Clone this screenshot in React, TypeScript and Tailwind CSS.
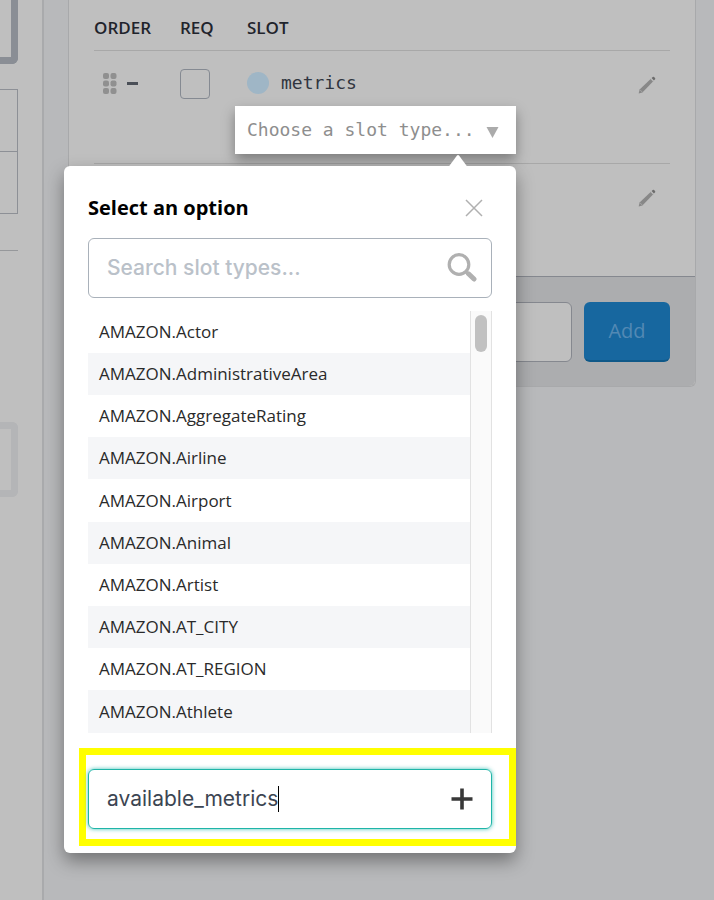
import React from "react";

const SLOT_TYPES = [
  "AMAZON.Actor",
  "AMAZON.AdministrativeArea",
  "AMAZON.AggregateRating",
  "AMAZON.Airline",
  "AMAZON.Airport",
  "AMAZON.Animal",
  "AMAZON.Artist",
  "AMAZON.AT_CITY",
  "AMAZON.AT_REGION",
  "AMAZON.Athlete",
];

function PencilIcon() {
  return (
    <svg width="18" height="18" viewBox="0 0 18 18" aria-hidden="true">
      <path d="M0.6 17.4 L1.6 13.6 L12.6 3 L15 5.4 L4.4 16.4 Z" fill="#888888" />
      <path d="M1.8 13.6 L4.4 16.2" stroke="#a5a5a5" strokeWidth="1" />
      <path d="M12.4 2.4 L15.6 5.6" stroke="#b4b4b4" strokeWidth="0.8" />
      <path d="M13.6 2.1 L14.8 0.9 Q15.5 0.4 16.1 1 L17 1.9 Q17.6 2.5 17.1 3.2 L15.9 4.4 Z" fill="#6c6c6c" />
    </svg>
  );
}

function GripIcon() {
  return (
    <svg width="14" height="22" viewBox="0 0 14 22" fill="#909090" aria-hidden="true">
      {[0, 7.5, 15].map((y) => (
        <g key={y}>
          <rect x="0" y={y} width="6" height="6" rx="2" />
          <rect x="7.5" y={y} width="6" height="6" rx="2" />
        </g>
      ))}
    </svg>
  );
}

function EditButton({ label }: { label: string }) {
  return (
    <button type="button" aria-label={label} className="block ml-auto mr-3.5">
      <PencilIcon />
    </button>
  );
}

function Sidebar() {
  return (
    <aside className="w-11 shrink-0 border-r-2 border-[#a9aaac] bg-[#bfbfbf] pr-6">
      <div className="h-16 rounded-br-md border-r-[7px] border-b-[7px] border-[#8a8e95]" />
      <div className="mt-[25px] h-[125px] border-y border-r border-[#8d9096]">
        <div className="h-[62px] border-b border-[#8d9096]" />
      </div>
      <div className="mt-9 border-t border-[#96989b]" />
      <div className="mt-[171px] h-[75px] rounded-r-md border-y-[7px] border-r-[7px] border-[#b4b5b7]" />
    </aside>
  );
}

function SlotTypePopover() {
  return (
    <div
      role="dialog"
      aria-labelledby="popover-title"
      className="absolute top-full right-0 z-10 mt-3 w-[452px] rounded-md bg-white px-6 pt-6 pb-[7px] shadow-[0_8px_18px_rgba(0,0,0,0.38)]"
    >
      <svg className="absolute -top-3 right-12" width="20" height="13" viewBox="0 0 20 13" aria-hidden="true">
        <path d="M0.5 13 L9 1.5 Q10 0.4 11 1.5 L19.5 13 Z" fill="#ffffff" />
      </svg>

      <div className="mb-3 flex h-9 items-center justify-between pr-2">
        <h2 id="popover-title" className="text-xl font-bold text-black">
          Select an option
        </h2>
        <button type="button" aria-label="Close">
          <svg width="20" height="20" viewBox="0 0 20 20" stroke="#b0b0b0" strokeWidth="1.5" aria-hidden="true">
            <path d="M2 2 L18 18 M18 2 L2 18" />
          </svg>
        </button>
      </div>

      <div className="flex h-15 items-center rounded-md border border-[#a9b1ba] pr-3.5 pl-[18px]">
        <input
          type="text"
          aria-label="Search slot types"
          placeholder="Search slot types..."
          className="min-w-0 flex-1 font-['Inter',sans-serif] text-[21px] font-medium outline-none placeholder:text-[#bac1c9]"
        />
        <svg width="30" height="30" viewBox="0 0 30 30" fill="none" stroke="#b0b0b0" aria-hidden="true">
          <circle cx="12" cy="11.5" r="9.8" strokeWidth="3.2" />
          <path d="M18.8 18.8 L20.5 20.5" strokeWidth="3" />
          <path d="M21.5 20.8 L27 26" strokeWidth="5" strokeLinecap="round" />
        </svg>
      </div>

      <div className="mt-[13px] flex h-[422px]">
        <ul className="flex flex-1 flex-col text-[17px] text-[#2a2a2a]">
          {SLOT_TYPES.map((type) => (
            <li key={type} className="flex flex-1 items-center px-[11px] even:bg-[#f5f6f8]">
              {type}
            </li>
          ))}
        </ul>
        <div className="w-[22px] border-x border-[#e2e2e2] bg-[#fafafa] px-1 pt-1">
          <div className="h-[37px] w-3 rounded-full bg-[#c1c1c1]" />
        </div>
      </div>

      <form className="mt-[15px] -mr-6 -ml-[9px] border-[7px] border-[#ffff00] pt-3.5 pr-[17px] pb-2.5 pl-[2px]">
        <div className="relative flex h-15 items-center rounded-md border border-[#1fb5a8] pr-[18px] pl-[18px] shadow-[0_0_4px_rgba(47,189,177,0.9)]">
          <input
            type="text"
            aria-label="New slot type"
            defaultValue="available_metrics"
            className="min-w-0 flex-1 font-['Inter',sans-serif] text-[21px] text-[#3c4552] outline-none"
          />
          <span className="absolute top-4 left-[189px] h-[26px] w-px bg-black" />
          <button type="button" aria-label="Add slot type">
            <svg width="22" height="22" viewBox="0 0 22 22" stroke="#383838" strokeWidth="3.6" aria-hidden="true">
              <path d="M11 0.5 V21.5 M0.5 11 H21.5" />
            </svg>
          </button>
        </div>
      </form>
    </div>
  );
}

function SlotTypePicker() {
  return (
    <div className="relative mt-[9px] -ml-3 w-[281px] bg-white shadow-[0_6px_12px_rgba(0,0,0,0.35)]">
      <select
        aria-label="Slot type"
        className="block h-12 w-full appearance-none px-3 font-['DejaVu_Sans_Mono',monospace] text-lg text-[#8e8e8e] outline-none"
      >
        <option>Choose a slot type...</option>
      </select>
      <svg className="pointer-events-none absolute top-5 right-[17px]" width="13" height="13" viewBox="0 0 13 13" aria-hidden="true">
        <path d="M0.5 1 H12.5 L6.5 12 Z" fill="#ababab" />
      </svg>
      <SlotTypePopover />
    </div>
  );
}

export default function App() {
  return (
    <div className="flex min-h-screen overflow-hidden bg-[#b8b9bb] font-['Open_Sans',sans-serif]">
      <Sidebar />
      <main className="mr-[18px] ml-6 min-w-0 flex-1 self-start rounded-b-md border-x border-b border-[#a8a9ab] bg-[#bfbfbf]">
        <div className="px-[25px]">
          <table className="w-full table-fixed border-collapse">
            <thead>
              <tr className="h-[50px] border-b border-[#a8a8a8] text-left text-[17px] text-[#1f242c]">
                <th className="w-[86px] pt-1.5 font-semibold">ORDER</th>
                <th className="w-[67px] pt-1.5 font-semibold">REQ</th>
                <th className="pt-1.5 font-semibold">SLOT</th>
                <th className="w-16" />
              </tr>
            </thead>
            <tbody>
              <tr className="h-[113px] border-b border-[#a8a8a8] align-top">
                <td className="pt-[22px]">
                  <div className="flex items-center gap-2.5 pl-[9px]">
                    <GripIcon />
                    <span className="h-[3px] w-[11px] bg-[#4a4f57]" />
                  </div>
                </td>
                <td className="pt-[18px]">
                  <input
                    type="checkbox"
                    aria-label="Required"
                    className="block size-[30px] appearance-none rounded-sm border border-[#858a92]"
                  />
                </td>
                <td className="pt-[18px]">
                  <div className="flex h-7 items-center gap-3">
                    <span className="size-[22px] rounded-full bg-[#9fb6c6]" />
                    <span className="font-['DejaVu_Sans_Mono',monospace] text-lg text-[#30353e]">metrics</span>
                  </div>
                  <SlotTypePicker />
                </td>
                <td className="pt-[25px]">
                  <EditButton label="Edit metrics" />
                </td>
              </tr>
              <tr className="h-[113px] align-top">
                <td />
                <td />
                <td />
                <td className="pt-[25px]">
                  <EditButton label="Edit new slot" />
                </td>
              </tr>
            </tbody>
          </table>
        </div>
        <div className="flex gap-3 rounded-b-md border-t border-[#85888f] bg-[#acadaf] px-[25px] pt-[25px] pb-6">
          <input
            type="text"
            aria-label="New slot name"
            className="h-15 min-w-0 flex-1 rounded-md border border-[#85888f] bg-[#bfbfbf] px-4 outline-none"
          />
          <button
            type="button"
            className="h-15 w-[86px] rounded-md border-b-2 border-[#0f5888] bg-[#17679f] text-xl text-[#5289b4]"
          >
            Add
          </button>
        </div>
      </main>
    </div>
  );
}
